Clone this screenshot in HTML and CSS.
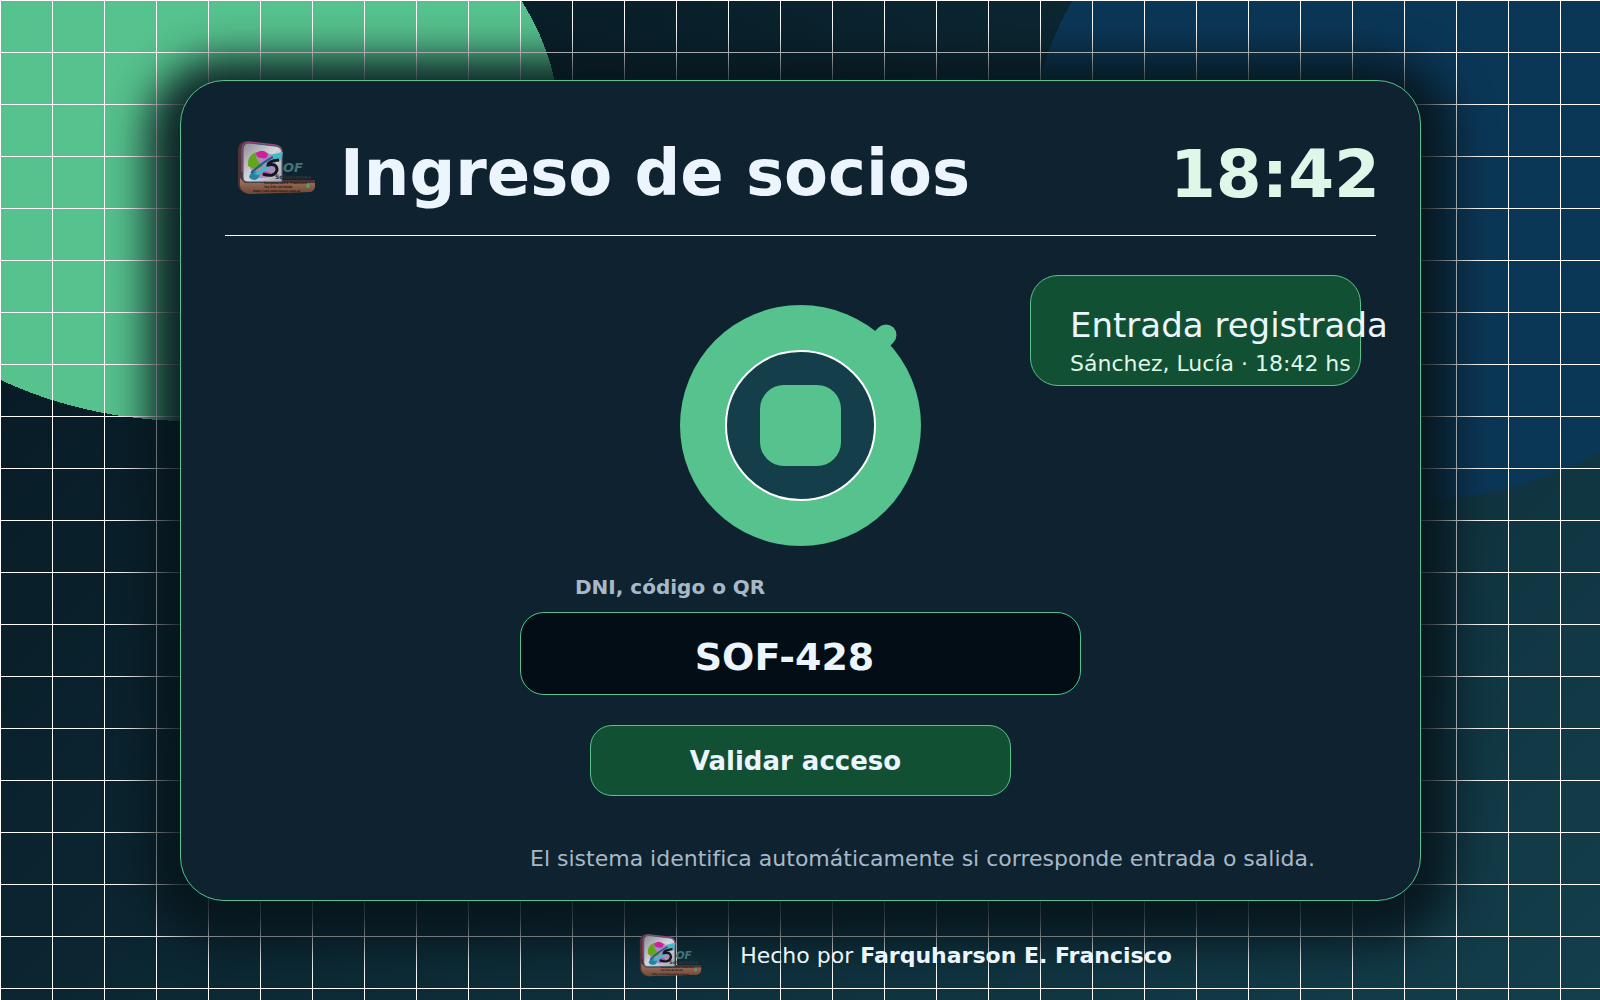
FILE: index.html
```html
<!DOCTYPE html>
<html lang="es">
<head>
    <meta charset="UTF-8">
    <meta name="viewport" content="width=device-width, initial-scale=1.0">
    <title>Ingreso de socios</title>
    <link rel="stylesheet" href="styles.css">
</head>
<body>
    <!-- Logo reutilizable -->
    <svg class="sprite" aria-hidden="true">
        <defs>
            <linearGradient id="metal" x1="0" y1="0" x2="1" y2="1">
                <stop offset="0" stop-color="#8b8b92"/>
                <stop offset="0.5" stop-color="#d6d6da"/>
                <stop offset="1" stop-color="#a5a5ab"/>
            </linearGradient>
            <linearGradient id="wood" x1="0" y1="0" x2="0" y2="1">
                <stop offset="0" stop-color="#a87860"/>
                <stop offset="1" stop-color="#6d4636"/>
            </linearGradient>
        </defs>
        <symbol id="logo" viewBox="0 0 84 56" overflow="visible">
            <path d="M1 9Q2 2 9 1L38 4Q46 5 46 12V40H78V47Q77 52 73 52L12 54Q3 53 1 45Z" fill="#4b3534"/>
            <path d="M3 38L8 43H78V47Q77 51 73 52L12 54Q4 52 3 46Z" fill="url(#wood)"/>
            <path d="M6 10Q6 3 12 3L38 6Q45 7 45 13V42L11 42Q6 42 6 37Z" fill="url(#metal)" stroke="#34577d"/>
            <path d="M5 32V9Q5 2 12 2L38 5Q45 6 45 13V18" fill="none" stroke="#a84b8c"/>
            <circle cx="26" cy="25" r="13" fill="#a78cc0"/>
            <path d="M11 26Q10 15 20 12Q17 20 26 26Q19 32 11 26Z" fill="#63a51d"/>
            <path d="M19 13Q26 8 31 14Q30 20 25 18Q19 18 19 13Z" fill="#cf209e"/>
            <path d="M24 34Q28 29 33 33Q29 39 24 34Z" fill="#b84f9f"/>
            <path d="M12 37Q14 30 22 32Q24 38 18 40Q14 40 12 37Z" fill="#2384a5"/>
            <path d="M17 34Q29 27 37 17L32 15L46 12L43 22L40 19Q32 30 21 35Z" fill="#42b9c9"/>
            <path d="M14 33Q26 22 36 17" fill="none" stroke="#285b86" stroke-width="2"/>
            <path d="M42 20Q31 21 31 25Q40 23 40 30Q38 38 26 34" fill="none" stroke="#14161b" stroke-width="3"/>
            <text class="logo-of" x="46" y="32">OF</text>
            <text class="logo-name" x="38" y="39">Soluciones</text>
            <text class="logo-small" x="27" y="44">Farquharson E. Francisco</text>
            <text class="logo-small" x="27" y="48">Tel:370-4270326</text>
            <text class="logo-small" x="16" y="52">http://sof-soluciones.com.ar</text>
            <circle cx="71" cy="46" r="2" fill="#4fa35b"/>
        </symbol>
    </svg>

    <main class="panel">
        <header class="panel-header">
            <svg class="logo" role="img" aria-label="SOF Soluciones"><use href="#logo"/></svg>
            <h1>Ingreso de socios</h1>
            <time class="clock">18:42</time>
        </header>

        <!-- Aviso del ultimo ingreso -->
        <div class="toast" role="status">
            <p class="toast-title">Entrada registrada</p>
            <p class="toast-text">Sánchez, Lucía · 18:42 hs</p>
        </div>

        <svg class="scanner" viewBox="0 0 241 241" aria-hidden="true">
            <circle cx="120.5" cy="120.5" r="120.5" fill="#56c28d"/>
            <path d="M190 46L206 30" stroke="#56c28d" stroke-width="21" stroke-linecap="round"/>
            <circle cx="120.5" cy="120.5" r="74.5" fill="#143e4a" stroke="#fff" stroke-width="2"/>
            <rect x="80" y="80" width="81" height="81" rx="24" fill="#56c28d"/>
        </svg>

        <form class="access-form">
            <label for="codigo">DNI, código o QR</label>
            <input type="text" id="codigo" value="SOF-428" autocomplete="off">
            <button type="button">Validar acceso</button>
        </form>

        <p class="hint">El sistema identifica automáticamente si corresponde entrada o salida.</p>
    </main>

    <footer class="credits">
        <svg class="logo logo-mini" role="img" aria-label="SOF Soluciones"><use href="#logo"/></svg>
        <p>Hecho por <strong>Farquharson E. Francisco</strong></p>
    </footer>
</body>
</html>
```
FILE: styles.css
```css
* {
    box-sizing: border-box;
}

body {
    margin: 0;
    min-height: 100vh;
    padding: 80px 179px 0 180px;
    font-family: "DejaVu Sans", sans-serif;
    color: #ecf5fd;
    /* Cuadricula, manchas de color y degradado de fondo */
    background:
        linear-gradient(#fff 1px, transparent 1px) 0 0 / 52px 52px,
        linear-gradient(90deg, #fff 1px, transparent 1px) 0 0 / 52px 52px,
        radial-gradient(370px 291px at 190px 130px, #56c28d 100%, transparent 100%),
        radial-gradient(376px 341px at calc(100% - 195px) 160px, #0b3757 100%, transparent 100%),
        linear-gradient(135deg, #061620, #133e4b);
}

h1, p {
    margin: 0;
}

.sprite {
    position: absolute;
    width: 0;
    height: 0;
}

.panel {
    position: relative;
    display: flex;
    flex-direction: column;
    align-items: center;
    min-height: 821px;
    padding: 44px 44px 28px;
    background: #0f2230;
    border: 1px solid #56c28d;
    border-radius: 44px;
    box-shadow: 0 10px 40px 32px rgba(8, 22, 28, 0.92);
}

.panel-header {
    display: flex;
    align-items: center;
    align-self: stretch;
    height: 111px;
    padding-left: 12px;
    border-bottom: 1px solid #fff;
}

.logo {
    width: 84px;
    height: 56px;
    margin-bottom: 24px;
    overflow: visible;
}

.logo-of {
    font: italic bold 13px "DejaVu Sans", sans-serif;
    fill: #417779;
}

.logo-name {
    font: bold 6px "DejaVu Sans", sans-serif;
    fill: #2e343a;
}

.logo-small {
    font: bold 3px "DejaVu Sans", sans-serif;
    fill: #211817;
}

h1 {
    margin-left: 19px;
    font-size: 64px;
    line-height: 76px;
    padding-bottom: 14px;
}

.clock {
    margin-left: auto;
    margin-right: -4px;
    font-size: 66px;
    font-weight: bold;
    line-height: 76px;
    padding-bottom: 10px;
    color: #dff7e9;
}

.toast {
    position: absolute;
    top: 194px;
    right: 59px;
    width: 331px;
    height: 111px;
    padding: 29px 0 0 39px;
    background: #125033;
    border: 1px solid #56c28d;
    border-radius: 28px;
    white-space: nowrap;
}

.toast-title {
    font-size: 34px;
    line-height: 40px;
}

.toast-text {
    font-size: 22px;
    line-height: 38px;
    color: #dff7e9;
}

.scanner {
    width: 241px;
    height: 241px;
    margin-top: 69px;
}

.access-form {
    display: flex;
    flex-direction: column;
    align-items: center;
    width: 561px;
    margin-top: 28px;
}

label {
    align-self: flex-start;
    margin-left: 55px;
    font-size: 20px;
    font-weight: bold;
    line-height: 26px;
    color: #a7b9c8;
}

input {
    width: 100%;
    height: 83px;
    margin-top: 12px;
    padding: 6px 32px 0 0;
    font: bold 38px "DejaVu Sans", sans-serif;
    text-align: center;
    color: #ecf5fd;
    background: #030d15;
    border: 1px solid #56c28d;
    border-radius: 24px;
}

button {
    width: 421px;
    height: 71px;
    margin-top: 30px;
    padding: 0 10px 0 0;
    font: bold 26px "DejaVu Sans", sans-serif;
    color: #ecf5fd;
    background: #125033;
    border: 1px solid #56c28d;
    border-radius: 22px;
    cursor: pointer;
}

.hint {
    margin-top: auto;
    margin-left: 244px;
    font-size: 22px;
    line-height: 26px;
    color: #a7b9c8;
}

.credits {
    position: relative;
    display: flex;
    justify-content: center;
    align-items: center;
    gap: 34px;
    margin-top: 32px;
    padding-left: 210px;
    font-size: 22px;
}

.logo-mini {
    width: 67px;
    height: 45px;
    margin: 0;
}
```
